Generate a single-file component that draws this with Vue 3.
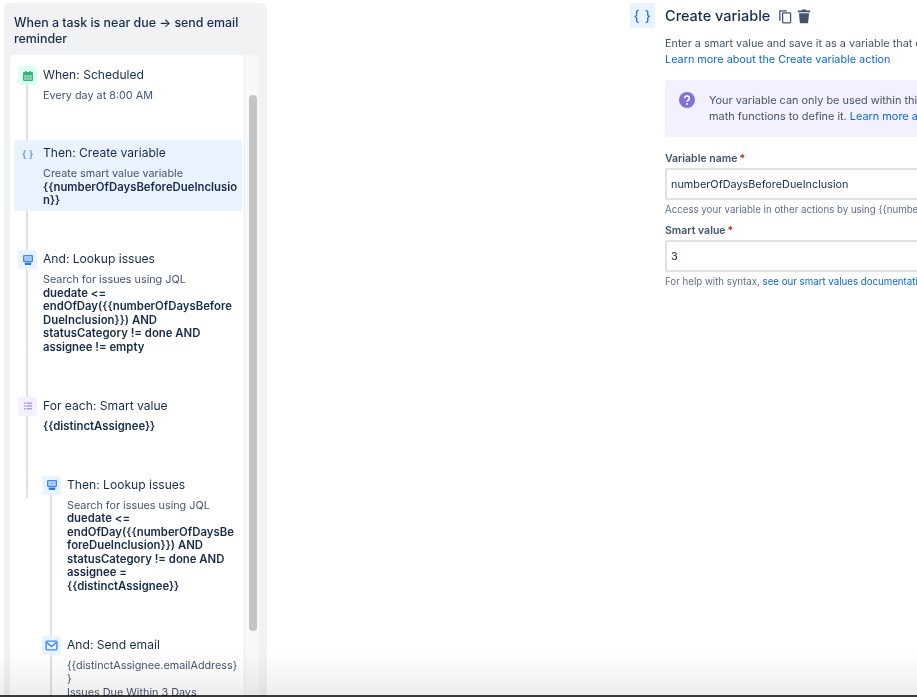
<script setup>
const varToken = '{{numberOfDaysBeforeDueInclusion}}'
const steps = [
  { key: 'when', title: 'When: Scheduled', icon: 'calendar', tone: 'green', desc: [{ text: 'Every day at 8:00 AM' }] },
  { key: 'var', title: 'Then: Create variable', icon: 'braces', tone: 'blue', selected: true, desc: [{ text: 'Create smart value variable' }, { text: varToken, bold: true }] },
  { key: 'lookup', title: 'And: Lookup issues', icon: 'lookup', tone: 'blue', desc: [{ text: 'Search for issues using JQL' }, { text: 'duedate <= endOfDay({{numberOfDaysBeforeDueInclusion}}) AND statusCategory != done AND assignee != empty', bold: true }] },
  { key: 'each', title: 'For each: Smart value', icon: 'list', tone: 'purple', desc: [{ text: '{{distinctAssignee}}', bold: true }] },
  { key: 'lookup2', nested: true, title: 'Then: Lookup issues', icon: 'lookup', tone: 'blue', desc: [{ text: 'Search for issues using JQL' }, { text: 'duedate <= endOfDay({{numberOfDaysBeforeDueInclusion}}) AND statusCategory != done AND assignee = {{distinctAssignee}}', bold: true }] },
  { key: 'mail', nested: true, title: 'And: Send email', icon: 'mail', tone: 'blue', desc: [{ text: '{{distinctAssignee.emailAddress}}' }, { text: 'Issues Due Within 3 Days' }] },
]
</script>

<template>
  <div class="page">
    <aside class="rule">
      <h2 class="rule-title">When a task is near due → send email reminder</h2>
      <div class="rule-body">
        <div class="timeline">
          <div
            v-for="s in steps"
            :key="s.key"
            class="step"
            :class="[s.key, { nested: s.nested, selected: s.selected }]"
          >
            <span class="tile" :class="s.tone">
              <svg v-if="s.icon === 'calendar'" viewBox="0 0 12 12" width="12" height="12">
                <rect x="1" y="2" width="10" height="9" rx="1.200" fill="#36b37e" />
                <rect x="3" y="1" width="1.400" height="2" fill="#36b37e" />
                <rect x="7.600" y="1" width="1.400" height="2" fill="#36b37e" />
                <path d="M2.200 5.200h7.600v4.600H2.200z" fill="#a3d9bf" />
                <path d="M4.600 5.200v4.600M7.400 5.200v4.600M2.200 7.500h7.600" stroke="#36b37e" stroke-width=".5" />
              </svg>
              <span v-else-if="s.icon === 'braces'" class="braces">{ }</span>
              <svg v-else-if="s.icon === 'lookup'" viewBox="0 0 12 12" width="12" height="12">
                <rect x="1" y="1" width="10" height="7" rx="1" fill="#388bff" />
                <rect x="2.400" y="2.300" width="7.200" height="4.400" fill="#cce0ff" />
                <path d="M3.400 5.400l2-1.400 1.200.8 2-1.200" stroke="#388bff" fill="none" stroke-width=".8" />
                <path d="M2.400 8.600h7.200l-.7 2.400H3.100z" fill="#1d7afc" />
              </svg>
              <svg v-else-if="s.icon === 'list'" viewBox="0 0 12 12" width="12" height="12">
                <g fill="#9f8fef">
                  <rect x="2" y="2.500" width="1.500" height="1.300" />
                  <rect x="2" y="5.300" width="1.500" height="1.300" />
                  <rect x="2" y="8.100" width="1.500" height="1.300" />
                  <rect x="4.500" y="2.500" width="5.500" height="1.300" />
                  <rect x="4.500" y="5.300" width="5.500" height="1.300" />
                  <rect x="4.500" y="8.100" width="5.500" height="1.300" />
                </g>
              </svg>
              <svg v-else viewBox="0 0 12 12" width="13" height="13">
                <rect x="1" y="2" width="10" height="8" rx="1" fill="none" stroke="#388bff" stroke-width="1.300" />
                <path d="M1.500 3l4.500 4 4.500-4" fill="none" stroke="#388bff" stroke-width="1.300" />
              </svg>
            </span>
            <div class="step-text">
              <div class="step-title">{{ s.title }}</div>
              <div class="step-desc">
                <div v-for="(d, i) in s.desc" :key="i" :class="{ strong: d.bold }">{{ d.text }}</div>
              </div>
            </div>
          </div>
        </div>
        <div class="track"><div class="thumb"></div></div>
      </div>
    </aside>

    <main class="detail">
      <span class="head-tile">{ }</span>
      <div class="form">
        <div class="head-row">
          <h1 class="head-title">Create variable</h1>
          <svg class="act" viewBox="0 0 16 16" width="16" height="16">
            <path d="M2.200 2.200h7.600v1.300H3.500v9.300H2.200z" fill="#44546f" />
            <rect x="5.600" y="4.900" width="8" height="10" rx=".8" fill="none" stroke="#44546f" stroke-width="1.300" />
          </svg>
          <svg class="act" viewBox="0 0 16 16" width="16" height="16">
            <path d="M1.800 2.600h3.600l.8-1h3.600l.8 1h3.600v1.700H1.800z" fill="#44546f" />
            <path d="M3 5.200h10l-.8 9.400a.8.8 0 0 1-.8.700H4.600a.8.8 0 0 1-.8-.700z" fill="#44546f" />
          </svg>
        </div>
        <p class="intro">
          <span class="line">Enter a smart value and save it as a variable that can be used in other actions.</span>
          <a class="link line">Learn more about the Create variable action</a>
        </p>
        <div class="notice">
          <svg viewBox="0 0 16 16" width="16" height="16" class="notice-icon">
            <circle cx="8" cy="8" r="8" fill="#8270db" />
            <path d="M5.700 6.200a2.300 2.300 0 1 1 3.500 2c-.8.500-1.200.8-1.200 1.500" fill="none" stroke="#fff" stroke-width="1.600" />
            <circle cx="8" cy="12" r="1" fill="#fff" />
          </svg>
          <div class="notice-text">
            <span class="line">Your variable can only be used within this rule. You can use text and</span>
            <span class="line">math functions to define it. <a class="link">Learn more about smart values</a></span>
          </div>
        </div>
        <label class="field-label">Variable name<span class="req">*</span></label>
        <div class="input">numberOfDaysBeforeDueInclusion</div>
        <div class="help">Access your variable in other actions by using {{ varToken }}</div>
        <label class="field-label second">Smart value<span class="req">*</span></label>
        <div class="input">3</div>
        <div class="help">For help with syntax, <a class="link">see our smart values documentation</a></div>
      </div>
    </main>

    <div class="fade"></div>
  </div>
</template>

<style>
html, body { margin: 0; background: #fff; overflow: hidden; }
</style>

<style scoped>
.page {
  position: relative;
  display: flex;
  width: 917px;
  height: 697px;
  overflow: hidden;
  background: #fff;
  font-family: Inter, "Liberation Sans", sans-serif;
  color: #172b4d;
}
.rule {
  flex: none;
  width: 263px;
  height: 800px;
  margin: 3px 0 0 4px;
  padding: 12px 8px 0 6px;
  box-sizing: border-box;
  background: #f1f2f4;
  border-radius: 6px 6px 0 0;
}
.rule-title {
  margin: 0 0 8px 4px;
  font-size: 12.400px;
  line-height: 16px;
  font-weight: 500;
  color: #172b4d;
}
.rule-body {
  display: flex;
  height: 740px;
}
.timeline {
  flex: none;
  width: 235px;
  box-sizing: border-box;
  padding: 8px 2px 0 4px;
  background: #fff;
  border-radius: 4px 0 0 0;
  border-right: 1px solid #ebecf0;
}
.track {
  flex: none;
  width: 14px;
  box-sizing: border-box;
  padding: 40px 2px 0 4px;
  background: #f7f8f9;
}
.thumb {
  width: 8px;
  height: 536px;
  background: #c4c4c4;
  border-radius: 4px;
}
.step {
  position: relative;
  display: flex;
  gap: 6px;
  padding: 2px 3.200px 4.500px 4px;
  margin-bottom: 35px;
  border-radius: 4px;
}
.step.when { margin-bottom: 33px; }
.step.selected { padding-top: 3px; padding-bottom: 3.500px; margin-bottom: 36px; background: #e9f2ff; }
.step::before {
  content: "";
  position: absolute;
  left: 12px;
  top: 22px;
  bottom: -60px;
  width: 2px;
  background: #dfe1e6;
}
.step.selected::before { top: 71px; bottom: -40px; }
.step.nested { margin-left: 24px; padding-right: 4.200px; }
.tile {
  position: relative;
  z-index: 1;
  flex: none;
  width: 19px;
  height: 19px;
  margin-top: 1px;
  border-radius: 3px;
  display: flex;
  align-items: center;
  justify-content: center;
}
.tile.green { background: #dcfff1; }
.tile.blue { background: #e9f2ff; }
.tile.purple { background: #f3f0ff; }
.braces {
  font-size: 10px;
  font-weight: 500;
  color: #388bff;
  white-space: pre;
}
.step-text { min-width: 0; flex: 1; }
.step-title {
  font-size: 12.100px;
  line-height: 20px;
  color: #172b4d;
}
.step-desc {
  margin-top: 4px;
  font-size: 10.800px;
  line-height: 13.500px;
  color: #44546f;
  overflow-wrap: anywhere;
}
.strong {
  font-size: 11.350px;
  font-weight: 600;
  color: #172b4d;
  overflow-wrap: break-word;
}
.detail {
  flex: none;
  margin-left: 363px;
  display: flex;
  gap: 10px;
  padding-top: 3px;
}
.head-tile {
  flex: none;
  width: 25px;
  height: 25px;
  border-radius: 3px;
  background: #e9f2ff;
  color: #0c66e4;
  font-size: 14.500px;
  font-weight: 400;
  letter-spacing: .5px;
  display: flex;
  align-items: center;
  justify-content: center;
  white-space: pre;
}
.form {
  width: 520px;
}
.head-row {
  display: flex;
  align-items: center;
  gap: 3px;
  height: 25px;
}
.head-title {
  margin: 0 4px 0 0;
  font-size: 14.500px;
  line-height: 25px;
  font-weight: 500;
  color: #172b4d;
}
.act { flex: none; }
.intro {
  margin: 7px 0 13px;
  font-size: 10.850px;
  line-height: 16px;
  color: #44546f;
}
.line { display: block; white-space: nowrap; }
.link { color: #0c66e4; }
.notice {
  display: flex;
  gap: 14px;
  height: 57px;
  box-sizing: border-box;
  padding: 12px 14px;
  background: #f3f0ff;
  border-radius: 3px;
}
.notice-icon { flex: none; }
.notice-text {
  font-size: 10.900px;
  line-height: 16px;
  color: #44546f;
}
.field-label {
  display: block;
  margin-top: 15px;
  font-size: 10.500px;
  line-height: 13px;
  font-weight: 600;
  color: #44546f;
}
.field-label.second { margin-top: 7px; }
.req { color: #ae2a19; margin-left: 2px; }
.input {
  margin-top: 3px;
  height: 32px;
  box-sizing: border-box;
  border: 2px solid #dfe1e6;
  border-radius: 3px;
  padding: 0 4px;
  font-size: 10.850px;
  line-height: 28px;
  color: #172b4d;
}
.help {
  margin-top: 3px;
  font-size: 9.700px;
  line-height: 14px;
  color: #626f86;
  white-space: nowrap;
}
.fade {
  position: absolute;
  left: 0;
  right: 0;
  bottom: 0;
  height: 45px;
  box-sizing: border-box;
  border-bottom: 2px solid #3a3a3a;
  background: linear-gradient(to bottom, #fff, #eeeeee);
  mix-blend-mode: multiply;
  pointer-events: none;
}
</style>
